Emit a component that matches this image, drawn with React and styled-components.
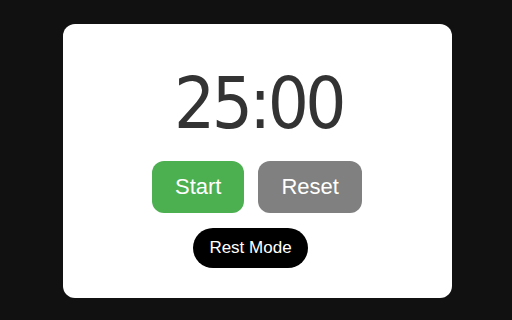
import styled, { createGlobalStyle } from "styled-components";

const GlobalStyle = createGlobalStyle`
  html, body {
    margin: 0;
    padding: 0;
    background-color: #111;
  }
  body {
    font-family: "Liberation Sans", Arial, sans-serif;
  }
`;

const Page = styled.div`
  width: 512px;
  height: 320px;
  box-sizing: border-box;
  padding: 2px 0 0 2px;
  display: flex;
  align-items: center;
  justify-content: center;
  background-color: #111;
`;

const Card = styled.div`
  width: 389px;
  height: 274px;
  box-sizing: border-box;
  background-color: #fff;
  border-radius: 12px;
  display: flex;
  flex-direction: column;
  align-items: center;
  padding-top: 41px;
`;

const Timer = styled.div`
  font-family: "DejaVu Sans Condensed", "DejaVu Sans", sans-serif;
  font-size: 72px;
  line-height: 77px;
  letter-spacing: -3.5px;
  margin-right: -3px;
  color: #333;
  margin-bottom: 19px;
`;

const Row = styled.div`
  display: flex;
  gap: 14px;
  margin-bottom: 15px;
`;

const Button = styled.button`
  border: 0;
  border-radius: 12px;
  padding: 13px 23px;
  font-family: "Liberation Sans", Arial, sans-serif;
  font-size: 22px;
  color: #fff;
  cursor: pointer;
  background-color: ${({ $variant }) => ($variant === "start" ? "#4caf50" : "#808080")};
`;

const ModeButton = styled.button`
  border: 0;
  border-radius: 20px;
  padding: 10px 16px;
  margin-right: 13px;
  font-family: "Liberation Sans", Arial, sans-serif;
  font-size: 17px;
  color: #fff;
  background-color: #000;
  cursor: pointer;
`;

export default function App() {
  return (
    <Page>
      <GlobalStyle />
      <Card>
        <Timer>25:00</Timer>
        <Row>
          <Button $variant="start">Start</Button>
          <Button $variant="reset">Reset</Button>
        </Row>
        <ModeButton>Rest Mode</ModeButton>
      </Card>
    </Page>
  );
}
